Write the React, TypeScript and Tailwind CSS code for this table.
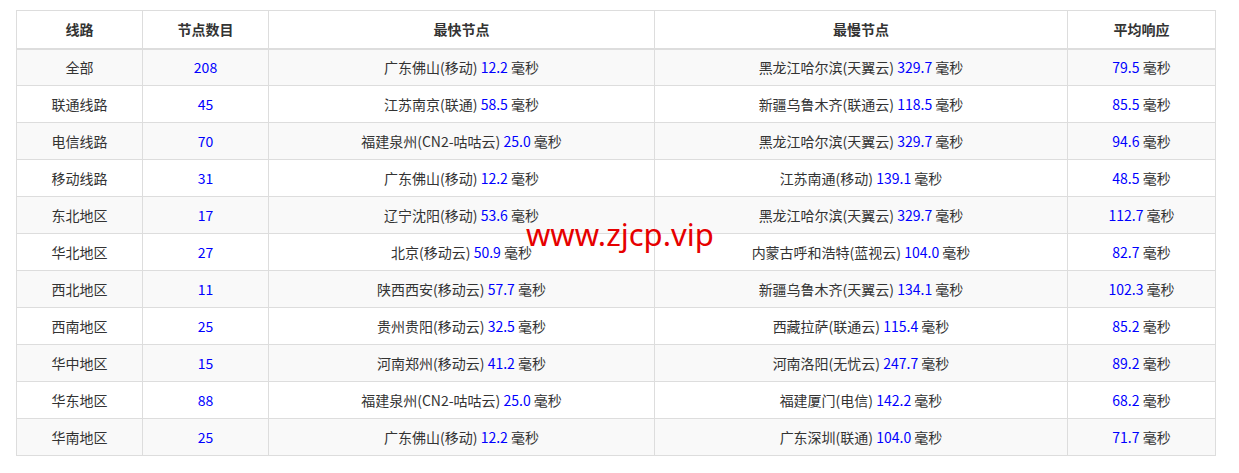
import React from 'react';

type Row = {
  name: string;
  count: number;
  fast: string;
  fastMs: string;
  slow: string;
  slowMs: string;
  avg: string;
};

const rows: Row[] = [
  { name: '全部', count: 208, fast: '广东佛山(移动)', fastMs: '12.2', slow: '黑龙江哈尔滨(天翼云)', slowMs: '329.7', avg: '79.5' },
  { name: '联通线路', count: 45, fast: '江苏南京(联通)', fastMs: '58.5', slow: '新疆乌鲁木齐(联通云)', slowMs: '118.5', avg: '85.5' },
  { name: '电信线路', count: 70, fast: '福建泉州(CN2-咕咕云)', fastMs: '25.0', slow: '黑龙江哈尔滨(天翼云)', slowMs: '329.7', avg: '94.6' },
  { name: '移动线路', count: 31, fast: '广东佛山(移动)', fastMs: '12.2', slow: '江苏南通(移动)', slowMs: '139.1', avg: '48.5' },
  { name: '东北地区', count: 17, fast: '辽宁沈阳(移动)', fastMs: '53.6', slow: '黑龙江哈尔滨(天翼云)', slowMs: '329.7', avg: '112.7' },
  { name: '华北地区', count: 27, fast: '北京(移动云)', fastMs: '50.9', slow: '内蒙古呼和浩特(蓝视云)', slowMs: '104.0', avg: '82.7' },
  { name: '西北地区', count: 11, fast: '陕西西安(移动云)', fastMs: '57.7', slow: '新疆乌鲁木齐(天翼云)', slowMs: '134.1', avg: '102.3' },
  { name: '西南地区', count: 25, fast: '贵州贵阳(移动云)', fastMs: '32.5', slow: '西藏拉萨(联通云)', slowMs: '115.4', avg: '85.2' },
  { name: '华中地区', count: 15, fast: '河南郑州(移动云)', fastMs: '41.2', slow: '河南洛阳(无忧云)', slowMs: '247.7', avg: '89.2' },
  { name: '华东地区', count: 88, fast: '福建泉州(CN2-咕咕云)', fastMs: '25.0', slow: '福建厦门(电信)', slowMs: '142.2', avg: '68.2' },
  { name: '华南地区', count: 25, fast: '广东佛山(移动)', fastMs: '12.2', slow: '广东深圳(联通)', slowMs: '104.0', avg: '71.7' },
];

const Ms = ({ v }: { v: string }) => (
  <>
    <span className="text-[#0000ff]">{v}</span> 毫秒
  </>
);

export default function App() {
  return (
    <div
      className="relative bg-white w-[1239px] h-[473px] pt-[10px] pl-[16px] text-[#333] text-[14px]"
      style={{ fontFamily: '"Noto Sans CJK SC", "Noto Sans", sans-serif' }}
    >
      <table className="border-collapse table-fixed w-[1199px] leading-[18px]">
        <colgroup>
          <col className="w-[126px]" />
          <col className="w-[126px]" />
          <col className="w-[386px]" />
          <col className="w-[413px]" />
          <col className="w-[148px]" />
        </colgroup>
        <thead>
          <tr className="h-[38px]">
            {['线路', '节点数目', '最快节点', '最慢节点', '平均响应'].map((h) => (
              <th key={h} className="border border-[#ddd] border-b-2 font-bold text-center p-0 pb-[1px]">
                {h}
              </th>
            ))}
          </tr>
        </thead>
        <tbody>
          {rows.map((r, i) => (
            <tr key={r.name} className={`h-[37px] ${i % 2 === 0 ? 'bg-[#f9f9f9]' : 'bg-white'}`}>
              <td className="border border-[#ddd] text-center p-0 pb-[1px]">{r.name}</td>
              <td className="border border-[#ddd] text-center p-0 pb-[1px] text-[#0000ff]">{r.count}</td>
              <td className="border border-[#ddd] text-center p-0 pb-[1px]">
                {r.fast} <Ms v={r.fastMs} />
              </td>
              <td className="border border-[#ddd] text-center p-0 pb-[1px]">
                {r.slow} <Ms v={r.slowMs} />
              </td>
              <td className="border border-[#ddd] text-center p-0 pb-[1px]">
                <Ms v={r.avg} />
              </td>
            </tr>
          ))}
        </tbody>
      </table>

      {/* watermark */}
      <div
        className="absolute left-[526px] top-[214px] text-[31px] leading-[40px] text-[#e60000]"
        style={{ fontFamily: '"Noto Sans", sans-serif' }}
      >
        www.zjcp.vip
      </div>
    </div>
  );
}
